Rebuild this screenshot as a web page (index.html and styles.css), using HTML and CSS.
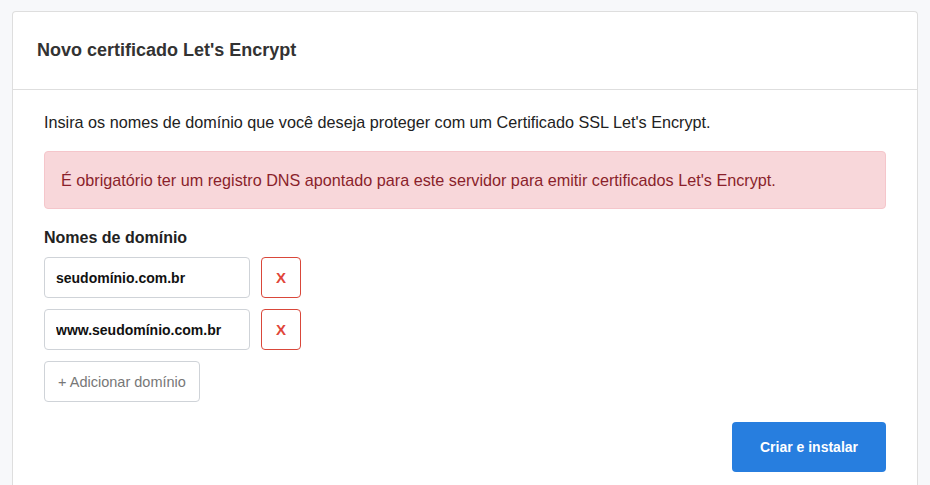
FILE: index.html
```html
<!DOCTYPE html>
<html lang="pt-BR">
<head>
<meta charset="utf-8">
<link rel="stylesheet" href="styles.css">
</head>
<body>
<div class="card">
  <div class="card-header">
    <h1 class="card-title">Novo certificado Let's Encrypt</h1>
  </div>
  <div class="card-body">
    <p class="intro">Insira os nomes de domínio que você deseja proteger com um Certificado SSL Let's Encrypt.</p>
    <div class="alert">É obrigatório ter um registro DNS apontado para este servidor para emitir certificados Let's Encrypt.</div>
    <div class="label">Nomes de domínio</div>
    <div class="domains">
      <div class="row">
        <input class="input" type="text" value="seudomínio.com.br">
        <button class="remove" type="button">X</button>
      </div>
      <div class="row">
        <input class="input" type="text" value="www.seudomínio.com.br">
        <button class="remove" type="button">X</button>
      </div>
      <div class="row">
        <button class="add" type="button">+ Adicionar domínio</button>
      </div>
    </div>
    <div class="actions">
      <button class="submit" type="button">Criar e instalar</button>
    </div>
  </div>
</div>
</body>
</html>
```
FILE: styles.css
```css
* { box-sizing: border-box; }
html, body { margin: 0; padding: 0; }
body {
  background: #f7f8fa;
  font-family: "Liberation Sans", Arial, sans-serif;
  color: #333;
  padding: 11px 12px 0 12px;
  height: 485px;
  overflow: hidden;
}
.card {
  background: #fff;
  border: 1px solid #dedede;
  border-bottom: none;
  border-radius: 4px 4px 0 0;
  height: 474px;
}
.card-header {
  height: 78px;
  border-bottom: 1px solid #dedede;
  display: flex;
  align-items: center;
  padding: 0 24px;
}
.card-title {
  margin: 0;
  font-size: 18px;
  font-weight: 700;
  color: #333;
}
.card-body {
  padding: 20px 31px 0 31px;
}
.intro {
  margin: 0 0 17px 0;
  font-size: 16.2px;
  line-height: 24px;
  color: #222;
}
.alert {
  background: #f8d7da;
  border: 1px solid #f5c6cb;
  border-radius: 4px;
  color: #8a1f2b;
  font-size: 16.2px;
  line-height: 24px;
  padding: 16px;
}
.label {
  margin-top: 17px;
  font-size: 16px;
  line-height: 24px;
  font-weight: 700;
  color: #222;
}
.domains {
  margin-top: 7px;
  display: flex;
  flex-direction: column;
  gap: 11px;
}
.row {
  display: flex;
  gap: 11px;
}
.input {
  width: 206px;
  height: 41px;
  border: 1px solid #cfd3d8;
  border-radius: 4px;
  padding: 0 11px;
  font-family: "Liberation Sans", Arial, sans-serif;
  font-size: 14px;
  font-weight: 700;
  color: #111;
  background: #fff;
  outline: none;
}
.remove {
  width: 40px;
  height: 41px;
  border: 1px solid #d9473a;
  border-radius: 4px;
  background: #fff;
  color: #e0463a;
  font-family: "Liberation Sans", Arial, sans-serif;
  font-size: 15px;
  font-weight: 700;
  padding: 0;
}
.add {
  height: 41px;
  width: 156px;
  border: 1px solid #cfd3d8;
  border-radius: 4px;
  background: #fff;
  color: #777;
  font-family: "Liberation Sans", Arial, sans-serif;
  font-size: 14.5px;
  padding: 0;
}
.actions {
  display: flex;
  justify-content: flex-end;
  margin-top: 20px;
}
.submit {
  width: 154px;
  height: 50px;
  border: none;
  border-radius: 4px;
  background: #277edf;
  color: #fff;
  font-family: "Liberation Sans", Arial, sans-serif;
  font-size: 14px;
  font-weight: 700;
}
```
